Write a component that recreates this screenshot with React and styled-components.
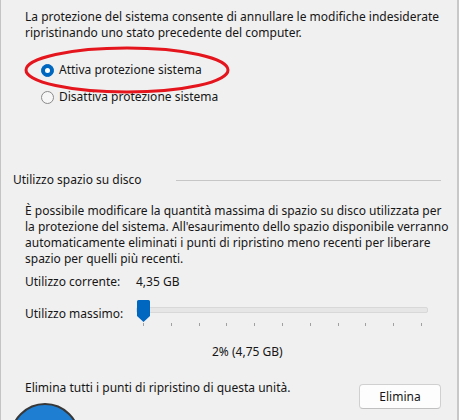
import React from "react"
import styled, { createGlobalStyle } from "styled-components"

const GlobalStyle = createGlobalStyle`
    html, body {
        margin: 0;
        padding: 0;
        background: #f0f0f0;
    }
    body {
        font-family: "Noto Sans", "Open Sans", sans-serif;
        font-size: 12px;
        line-height: 16px;
        color: #161616;
    }
`

const Panel = styled.div`
    position: relative;
    box-sizing: border-box;
    width: 459px;
    height: 420px;
    overflow: hidden;
    padding: 9px 0 0 24px;
    border-left: 1px solid #c4c4c4;
    border-right: 2px solid #c8c8c8;
`

const Text = styled.p`
    margin: 0;
    margin-top: ${({ $top }) => $top || 0}px;
`

const Options = styled.div`
    display: flex;
    flex-direction: column;
    gap: 11px;
    margin: 21px 0 0 16px;
`

const RadioRow = styled.label`
    display: flex;
    align-items: center;
    gap: 5px;
    height: 16px;
`

const RadioDot = styled.span`
    box-sizing: border-box;
    width: 13px;
    height: 13px;
    border-radius: 50%;
    border: 1px solid ${({ $on }) => ($on ? "#0067c0" : "#8a8a8a")};
    background: ${({ $on }) => ($on ? "#0067c0" : "#f6f6f6")};
    display: flex;
    align-items: center;
    justify-content: center;

    &::after {
        content: "";
        display: ${({ $on }) => ($on ? "block" : "none")};
        width: 5px;
        height: 5px;
        border-radius: 50%;
        background: #fff;
    }
`

const Highlight = styled.svg`
    position: absolute;
    left: 22px;
    top: 45px;
`

const SectionHead = styled.div`
    display: flex;
    align-items: center;
    margin: 67px 16px 0 -12px;
`

const HeadLine = styled.div`
    width: 265px;
    height: 1px;
    margin-left: auto;
    background: #c6c6c6;
`

const InfoGrid = styled.div`
    display: grid;
    grid-template-columns: 111px 1fr;
    align-items: center;
    margin-top: ${({ $top }) => $top}px;
`

const SliderBox = styled.div`
    position: relative;
    width: 292px;
    height: 24px;
`

const Track = styled.div`
    position: absolute;
    left: 0;
    right: 0;
    top: 5px;
    height: 4px;
    border: 1px solid #d8d8d8;
    border-radius: 2px;
    background: #e6e6e6;
`

const Thumb = styled.svg`
    position: absolute;
    left: 1px;
    top: -2px;
`

const Ticks = styled.div`
    position: absolute;
    left: 7px;
    right: 6px;
    top: 21px;
    display: flex;
    justify-content: space-between;

    span {
        width: 1px;
        height: 3px;
        background: #a0a0a0;
    }
`

const Percent = styled.div`
    margin: 18px 0 0 187px;
`

const BottomRow = styled.div`
    display: flex;
    justify-content: space-between;
    align-items: flex-start;
    margin: 20px 16px 0 0;
`

const Button = styled.button`
    box-sizing: border-box;
    width: 82px;
    height: 25px;
    margin-top: 4px;
    padding: 0;
    font: inherit;
    color: #161616;
    background: #fdfdfd;
    border: 1px solid #d0d0d0;
    border-bottom-color: #c0c0c0;
    border-radius: 4px;
`

const Badge = styled.div`
    position: absolute;
    left: 9px;
    top: 403px;
    width: 66px;
    height: 66px;
    border-radius: 50%;
    background: #1e7fd2;
    border: 2px solid #383838;
`

export default function App() {
    return (
        <>
            <GlobalStyle />
            <Panel>
                <Text>
                    La protezione del sistema consente di annullare le modifiche indesiderate
                    <br />
                    ripristinando uno stato precedente del computer.
                </Text>
                <Options>
                    <RadioRow>
                        <RadioDot $on />
                        Attiva protezione sistema
                    </RadioRow>
                    <RadioRow>
                        <RadioDot />
                        Disattiva protezione sistema
                    </RadioRow>
                </Options>
                <Highlight width="210" height="52" viewBox="0 0 210 52">
                    <ellipse cx="104" cy="25" rx="101" ry="22" fill="none" stroke="#e5151d" strokeWidth="3" />
                </Highlight>

                <SectionHead>
                    <span>Utilizzo spazio su disco</span>
                    <HeadLine />
                </SectionHead>

                <Text $top={15}>
                    È possibile modificare la quantità massima di spazio su disco utilizzata per
                    <br />
                    la protezione del sistema. All'esaurimento dello spazio disponibile verranno
                    <br />
                    automaticamente eliminati i punti di ripristino meno recenti per liberare
                    <br />
                    spazio per quelli più recenti.
                </Text>

                <InfoGrid $top={7}>
                    <span>Utilizzo corrente:</span>
                    <span>4,35 GB</span>
                </InfoGrid>
                <InfoGrid $top={12}>
                    <span>Utilizzo massimo:</span>
                    <SliderBox>
                        <Track />
                        <Thumb width="13" height="22" viewBox="0 0 13 22">
                            <path d="M1.5 0 H11.5 A1.5 1.5 0 0 1 13 1.5 V16 L6.5 22 L0 16 V1.5 A1.5 1.5 0 0 1 1.5 0 Z" fill="#0067c0" />
                        </Thumb>
                        <Ticks>
                            {Array.from({ length: 11 }).map((_, i) => (
                                <span key={i} />
                            ))}
                        </Ticks>
                    </SliderBox>
                </InfoGrid>

                <Percent>2% (4,75 GB)</Percent>

                <BottomRow>
                    <span>Elimina tutti i punti di ripristino di questa unità.</span>
                    <Button>Elimina</Button>
                </BottomRow>

                <Badge />
            </Panel>
        </>
    )
}
